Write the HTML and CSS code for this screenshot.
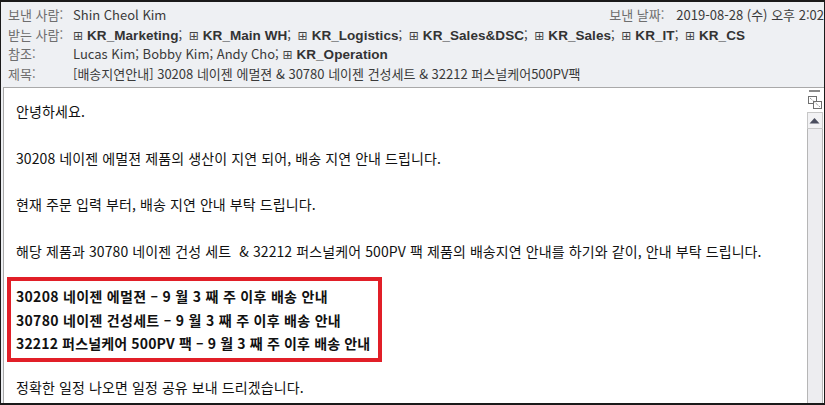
FILE: index.html
```html
<!DOCTYPE html>
<html lang="ko">
<head>
<meta charset="utf-8">
<link rel="stylesheet" href="styles.css">
</head>
<body>
<div class="window">
  <div class="header">
    <div class="row">
      <span class="label">보낸 사람:</span>
      <span class="value">Shin Cheol Kim</span>
      <span class="date"><span class="label dl">보낸 날짜:</span><span class="value">2019-08-28 (수) 오후 2:02</span></span>
    </div>
    <div class="row">
      <span class="label">받는 사람:</span>
      <span class="value">
        <span class="grp"><span class="plus">⊞</span><b>KR_Marketing</b>;</span>
        <span class="grp"><span class="plus">⊞</span><b>KR_Main WH</b>;</span>
        <span class="grp"><span class="plus">⊞</span><b>KR_Logistics</b>;</span>
        <span class="grp"><span class="plus">⊞</span><b>KR_Sales&amp;DSC</b>;</span>
        <span class="grp"><span class="plus">⊞</span><b>KR_Sales</b>;</span>
        <span class="grp"><span class="plus">⊞</span><b>KR_IT</b>;</span>
        <span class="grp"><span class="plus">⊞</span><b>KR_CS</b></span>
      </span>
    </div>
    <div class="row">
      <span class="label">참조:</span>
      <span class="value">Lucas Kim; Bobby Kim; Andy Cho; <span class="grp"><span class="plus">⊞</span><b>KR_Operation</b></span></span>
    </div>
    <div class="row">
      <span class="label">제목:</span>
      <span class="value">[배송지연안내] 30208 네이젠 에멀젼 &amp; 30780 네이젠 건성세트 &amp; 32212 퍼스널케어500PV팩</span>
    </div>
  </div>
  <div class="bodywrap">
    <div class="content">
      <p>안녕하세요.</p>
      <p>30208 네이젠 에멀젼 제품의 생산이 지연 되어, 배송 지연 안내 드립니다.</p>
      <p>현재 주문 입력 부터, 배송 지연 안내 부탁 드립니다.</p>
      <p class="pre">해당 제품과 30780 네이젠 건성 세트 &nbsp;&amp; 32212 퍼스널케어 500PV 팩 제품의 배송지연 안내를 하기와 같이, 안내 부탁 드립니다.</p>
      <div class="redbox">
        <p>30208 네이젠 에멀젼 – 9 월 3 째 주 이후 배송 안내</p>
        <p>30780 네이젠 건성세트 – 9 월 3 째 주 이후 배송 안내</p>
        <p>32212 퍼스널케어 500PV 팩 – 9 월 3 째 주 이후 배송 안내</p>
      </div>
      <p class="last">정확한 일정 나오면 일정 공유 보내 드리겠습니다.</p>
    </div>
    <div class="scrollbar">
      <div class="dash"></div>
      <svg class="split" width="14" height="13" viewBox="0 0 14 13">
        <rect x="0.5" y="0.5" width="8" height="7" fill="#fff" stroke="#707070"/>
        <rect x="5.5" y="5.5" width="8" height="7" fill="#fff" stroke="#707070"/>
        <path d="M2 2 L12 11" stroke="#707070" stroke-dasharray="1 1"/>
      </svg>
      <div class="btn"><svg width="11" height="7" viewBox="0 0 11 7"><path d="M0.5 6.5 L5.5 1 L10.5 6.5 Z" fill="#4a4d5e"/></svg></div>
      <div class="track"></div>
    </div>
  </div>
</div>
</body>
</html>
```
FILE: styles.css
```css
html, body { margin: 0; padding: 0; }
body { width: 825px; height: 405px; overflow: hidden; background: #fff; }
.window {
  box-sizing: border-box;
  width: 825px; height: 405px;
  border: 1px solid #1a1a1a;
  border-top-width: 2px;
  border-bottom-width: 2px;
  display: flex; flex-direction: column;
  background: #eef0f3;
  font-family: "Noto Sans CJK KR", "Noto Sans", sans-serif;
  font-size: 13px;
  color: #333;
}
.header { padding: 3px 0 4px 7px; height: 78px; }
.row { display: flex; align-items: center; height: 19.5px; white-space: nowrap; }
.label { color: #6e6e6e; width: 65px; flex: none; }
.value { color: #3a3a3a; }
.date { margin-left: auto; display: flex; }
.dl { width: auto; margin-right: 12px; }
.grp { margin-right: 3px; }
.grp b { font-family: "Liberation Sans", Arial, sans-serif; font-weight: bold; font-size: 13.5px; color: #333; letter-spacing: 0.05px; }
.plus { font-family: "DejaVu Sans", sans-serif; font-size: 12px; color: #444; margin-right: 4px; }
.bodywrap {
  flex: 1; display: flex; background: #fff;
  border-top: 1px solid #a9a9a9;
  border-left: 1px solid #a9a9a9;
  margin-left: 2px;
  min-height: 0;
}
.content { flex: 1; padding: 12px 0 0 12px; color: #111; font-size: 14px; letter-spacing: 0.1px; line-height: 23.25px; overflow: hidden; }
.content p { margin: 0 0 23.25px 0; white-space: nowrap; }
.content p.pre { margin-bottom: 14.5px; }
.redbox {
  border: 4px solid #e11f28;
  width: 362px;
  margin-left: -9px;
  padding: 4px 0 2px 5px;
  margin-bottom: 14.5px;
  font-weight: bold;
  letter-spacing: 0.3px;
}
.redbox p { margin: 0 !important; line-height: 23.5px; }
.redbox p:last-child { letter-spacing: 0.15px; }
.scrollbar { width: 17px; flex: none; display: flex; flex-direction: column; align-items: center; background: #fff; margin-right: 1px; }
.dash { width: 11px; height: 2px; background: #8a8a8a; margin-top: 2px; flex: none; }
.split { margin-top: 4px; flex: none; }
.btn { box-sizing: border-box; width: 16px; height: 17px; background: #f2f2f4; border: 1px solid #c7c7c7; display: flex; align-items: center; justify-content: center; margin-top: 3px; flex: none; }
.track { flex: 1; box-sizing: border-box; width: 16px; border-left: 1px solid #b6b6b6; border-right: 1px solid #b6b6b6; background: #ededf0; }
```
